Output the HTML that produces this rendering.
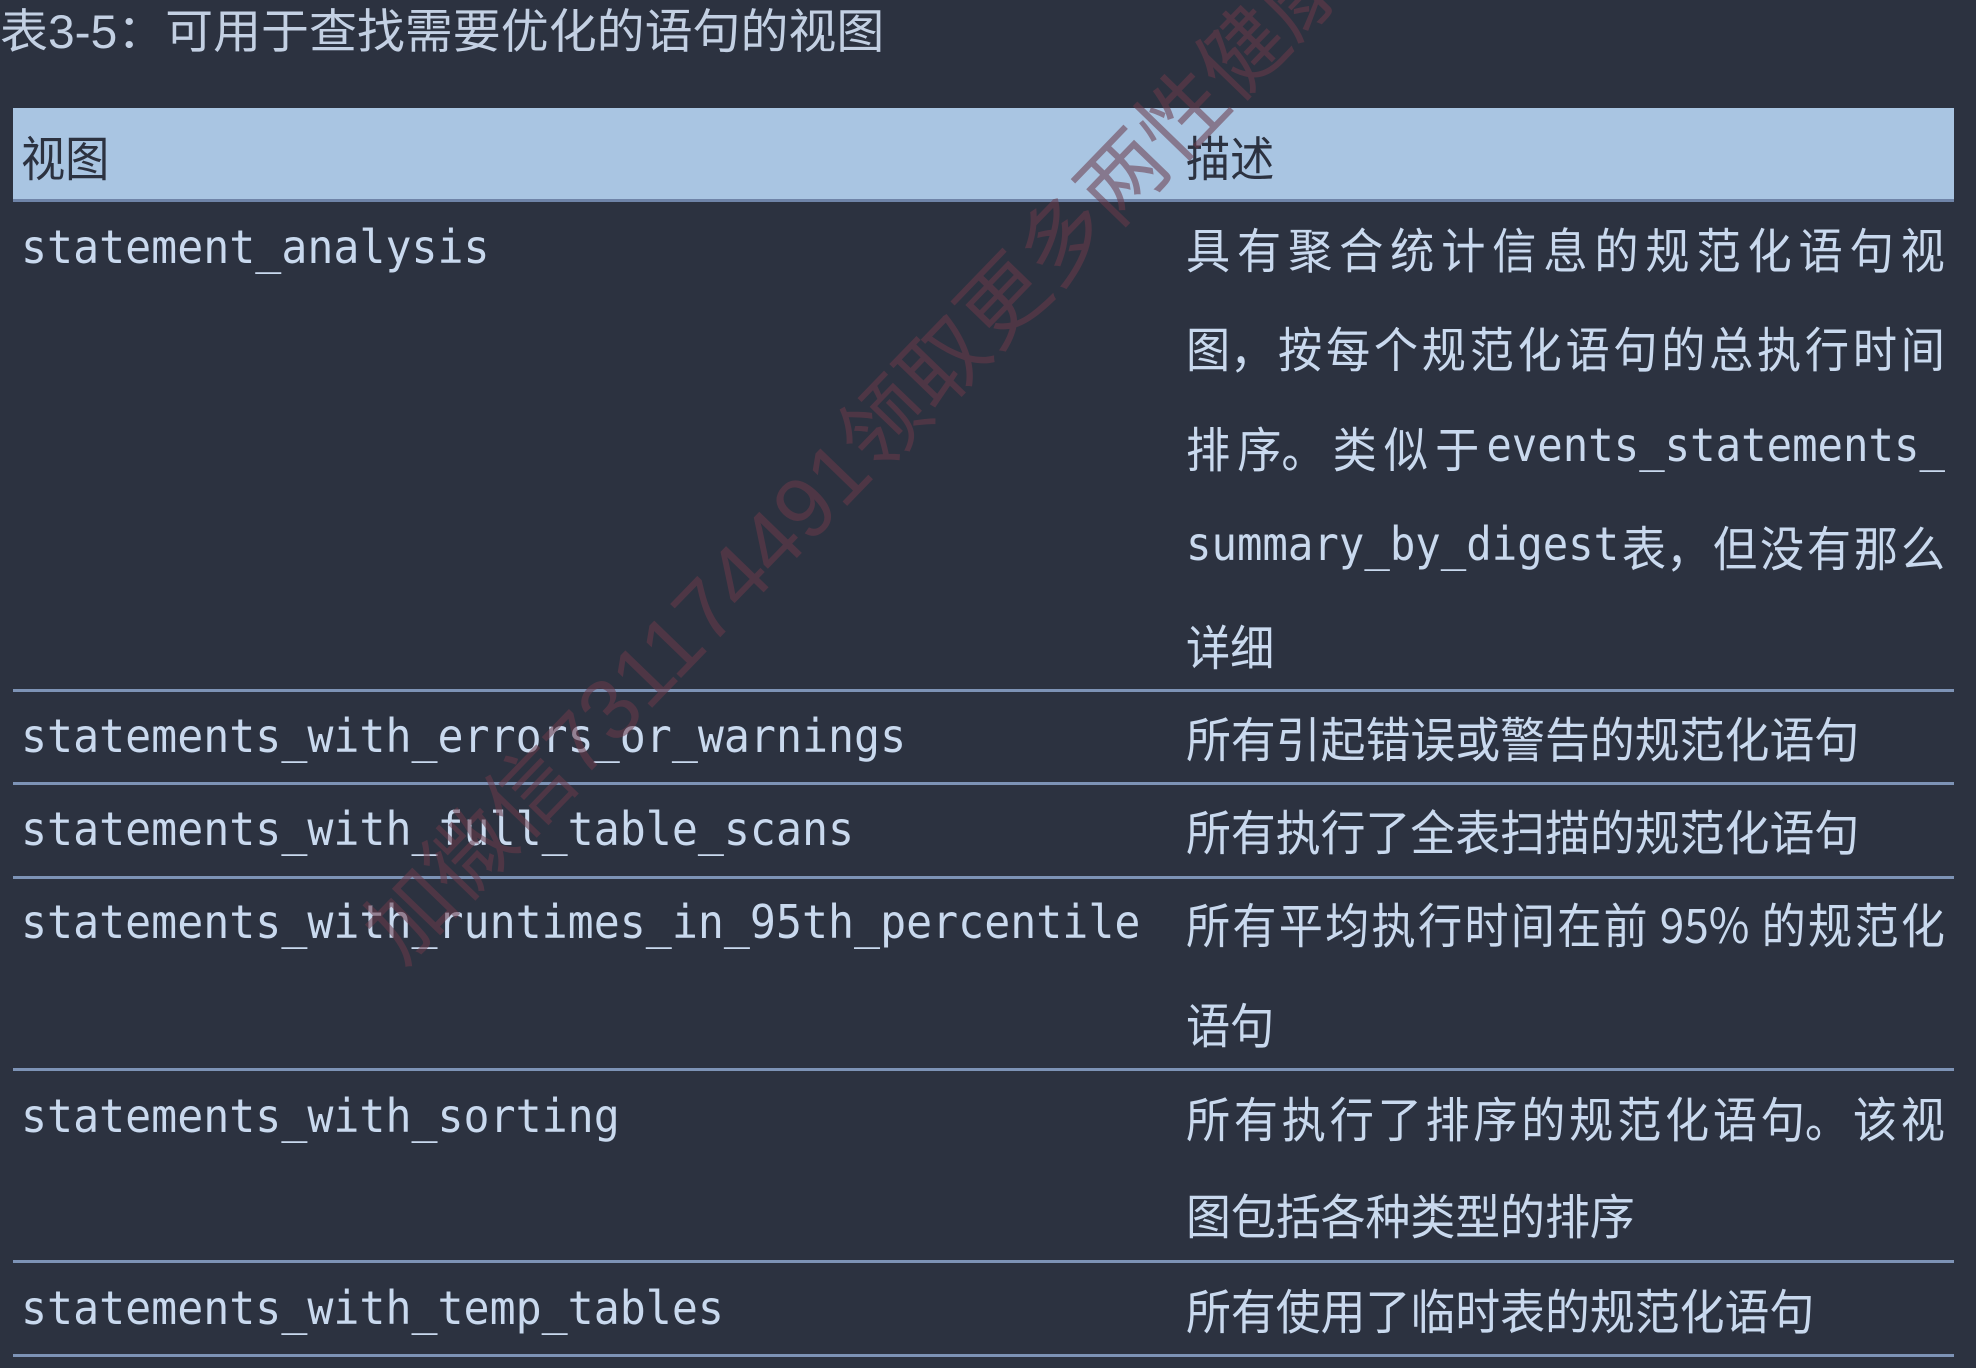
<!DOCTYPE html>
<html><head><meta charset="utf-8"><style>
html,body{margin:0;padding:0;}
body{width:1976px;height:1368px;background:#2c3240;position:relative;overflow:hidden;font-family:"Liberation Sans","Noto Sans CJK SC",sans-serif;color:#c9d9ee;}
.t{position:absolute;white-space:nowrap;line-height:1;}
.m{font-family:"DejaVu Sans Mono","Liberation Mono",monospace;font-size:46px;transform:scaleX(0.94);transform-origin:left center;}
.c{font-family:"Noto Sans CJK SC",sans-serif;font-size:48px;transform:scaleX(0.92);transform-origin:left center;}
.n{transform:scaleX(0.935);}
.j{width:825px;display:flex;justify-content:space-between;}
.cm{font-family:"DejaVu Sans Mono","Liberation Mono",monospace;font-size:46px;}
.line{position:absolute;left:13px;width:1941px;height:3px;background:#7d93b6;}
.hdr{position:absolute;left:13px;top:108px;width:1941px;height:94px;background:#a9c5e2;border-bottom:3px solid #6f84a8;box-sizing:border-box;}
</style></head><body>
<div class="t" style="left:0;top:8px;font-size:47px;color:#c3d0e3;font-family:'Liberation Sans','Noto Sans CJK SC',sans-serif;transform:scaleX(1.02);transform-origin:left center;">表3-5：可用于查找需要优化的语句的视图</div>
<div class="hdr"></div>
<div class="t c" style="left:21px;top:131px;color:#2c3240;">视图</div>
<div class="t c" style="left:1186px;top:131px;color:#2c3240;">描述</div>

<div class="t m" style="left:21px;top:224px;">statement_analysis</div>
<div class="t c j" style="left:1186px;top:223px;"><span>具</span><span>有</span><span>聚</span><span>合</span><span>统</span><span>计</span><span>信</span><span>息</span><span>的</span><span>规</span><span>范</span><span>化</span><span>语</span><span>句</span><span>视</span></div>
<div class="t c j" style="left:1186px;top:322px;"><span>图，</span><span>按</span><span>每</span><span>个</span><span>规</span><span>范</span><span>化</span><span>语</span><span>句</span><span>的</span><span>总</span><span>执</span><span>行</span><span>时</span><span>间</span></div>
<div class="t c j" style="left:1186px;top:422px;"><span>排</span><span>序。</span><span>类</span><span>似</span><span>于</span><span class="cm">events_statements_</span></div>
<div class="t c j" style="left:1186px;top:521px;"><span class="cm">summary_by_digest</span><span>表，</span><span>但</span><span>没</span><span>有</span><span>那</span><span>么</span></div>
<div class="t c" style="left:1186px;top:620px;">详细</div>
<div class="line" style="top:689px"></div>

<div class="t m" style="left:21px;top:713px;">statements_with_errors_or_warnings</div>
<div class="t c n" style="left:1186px;top:712px;">所有引起错误或警告的规范化语句</div>
<div class="line" style="top:782px"></div>

<div class="t m" style="left:21px;top:806px;">statements_with_full_table_scans</div>
<div class="t c n" style="left:1186px;top:805px;">所有执行了全表扫描的规范化语句</div>
<div class="line" style="top:876px"></div>

<div class="t m" style="left:21px;top:899px;">statements_with_runtimes_in_95th_percentile</div>
<div class="t c j" style="left:1186px;top:898px;"><span>所</span><span>有</span><span>平</span><span>均</span><span>执</span><span>行</span><span>时</span><span>间</span><span>在</span><span>前</span><span>&nbsp;95%&nbsp;</span><span>的</span><span>规</span><span>范</span><span>化</span></div>
<div class="t c" style="left:1186px;top:998px;">语句</div>
<div class="line" style="top:1068px"></div>

<div class="t m" style="left:21px;top:1093px;">statements_with_sorting</div>
<div class="t c j" style="left:1186px;top:1092px;"><span>所</span><span>有</span><span>执</span><span>行</span><span>了</span><span>排</span><span>序</span><span>的</span><span>规</span><span>范</span><span>化</span><span>语</span><span>句。</span><span>该</span><span>视</span></div>
<div class="t c n" style="left:1186px;top:1189px;">图包括各种类型的排序</div>
<div class="line" style="top:1260px"></div>

<div class="t m" style="left:21px;top:1285px;">statements_with_temp_tables</div>
<div class="t c n" style="left:1186px;top:1284px;">所有使用了临时表的规范化语句</div>
<div class="line" style="top:1354px"></div>

<div class="t" style="left:857px;top:454px;font-size:86px;color:#6a3a4a;opacity:0.55;font-family:'Liberation Sans','Noto Sans CJK SC',sans-serif;transform:translate(-50%,-50%) rotate(-46deg);">加微信731174491领取更多两性健康</div>
</body></html>
